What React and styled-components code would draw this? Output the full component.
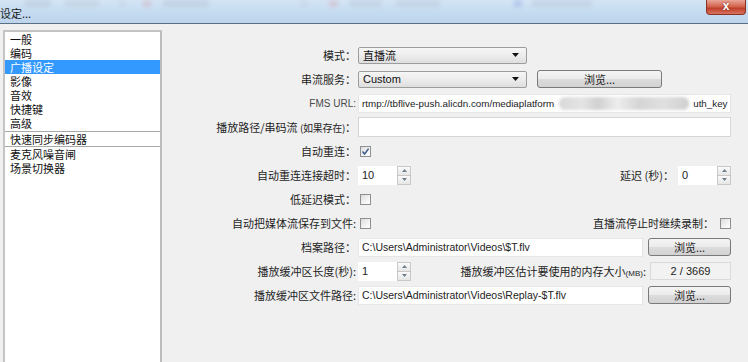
import React from "react"
import styled, { createGlobalStyle } from "styled-components"

const cjk = `"Noto Sans CJK SC", "Noto Sans", sans-serif`
const latin = `"Liberation Sans", "DejaVu Sans", sans-serif`

const GlobalStyle = createGlobalStyle`
    html, body {
        margin: 0;
        padding: 0;
        background: #f0f0f0;
    }
    body {
        width: 748px;
        height: 362px;
        overflow: hidden;
        font-family: ${cjk};
    }
`

const menuItems = [
    { label: "一般" },
    { label: "编码" },
    { label: "广播设定", selected: true },
    { label: "影像" },
    { label: "音效" },
    { label: "快捷键" },
    { label: "高级" },
    { label: "快速同步编码器", divided: true },
    { label: "麦克风噪音闸" },
    { label: "场景切换器" },
]

const ghosts = [
    { left: 25, width: 26, color: "#a9b7c6" },
    { left: 14, width: 34, color: "#b3c0ce" },
    { left: 20, width: 6, color: "#b9c5d2" },
    { left: 18, width: 8, color: "#d39aa4" },
    { left: 12, width: 46, color: "#aab8c8" },
    { left: 92, width: 6, color: "#bac6d3" },
    { left: 22, width: 9, color: "#d69ea6" },
    { left: 12, width: 32, color: "#aebccb" },
    { left: 14, width: 44, color: "#b0bdcc" },
    { left: 74, width: 8, color: "#7f93d9" },
    { left: 10, width: 60, color: "#aebccb" },
]

const CheckMark = () => (
    <svg width="9" height="9" viewBox="0 0 9 9">
        <path d="M1.5 4.6 L3.6 7 L7.6 1.6" fill="none" stroke="#3c5a8a" strokeWidth="1.5" />
    </svg>
)

const Arrow = ({ up }) => (
    <svg width="5" height="3" viewBox="0 0 5 3">
        <path d={up ? "M0 3 L2.5 0 L5 3 Z" : "M0 0 L2.5 3 L5 0 Z"} fill="#6f7d8c" />
    </svg>
)

const Spin = ({ value }) => (
    <SpinBox>
        <SpinValue>{value}</SpinValue>
        <SpinButtons>
            <SpinButton><Arrow up /></SpinButton>
            <SpinButton><Arrow /></SpinButton>
        </SpinButtons>
    </SpinBox>
)

const Select = ({ value }) => (
    <SelectBox>
        <span>{value}</span>
        <svg width="7" height="4" viewBox="0 0 7 4">
            <path d="M0 0 L7 0 L3.5 4 Z" fill="#111" />
        </svg>
    </SelectBox>
)

const App = () => {
    return (
        <>
            <GlobalStyle />
            <Window>
                <TitleBar>
                    <TitleLeft>
                        <GhostStrip>
                            {ghosts.map((g, i) => (
                                <Ghost key={i} left={g.left} width={g.width} color={g.color} />
                            ))}
                        </GhostStrip>
                        <Title>设定...</Title>
                    </TitleLeft>
                    <CloseButton>x</CloseButton>
                </TitleBar>
                <Body>
                    <Sidebar>
                        {menuItems.map((item, i) => (
                            <MenuItem key={i} selected={item.selected} divided={item.divided}>
                                {item.label}
                            </MenuItem>
                        ))}
                    </Sidebar>
                    <Form>
                        <Row>
                            <Label>模式：</Label>
                            <Controls>
                                <Select value="直播流" />
                            </Controls>
                        </Row>
                        <Row>
                            <Label>串流服务：</Label>
                            <Controls>
                                <Select value="Custom" />
                                <Button wide>浏览...</Button>
                            </Controls>
                        </Row>
                        <Row>
                            <Label latin>FMS URL:</Label>
                            <Controls>
                                <TextField url>
                                    rtmp://tbflive-push.alicdn.com/mediaplatform
                                    <Smudge />
                                    uth_key
                                </TextField>
                            </Controls>
                        </Row>
                        <Row>
                            <Label>播放路径/串码流 <Paren>(如果存在)</Paren>：</Label>
                            <Controls>
                                <TextField tall />
                            </Controls>
                        </Row>
                        <Row>
                            <Label>自动重连：</Label>
                            <Controls>
                                <CheckBox><CheckMark /></CheckBox>
                            </Controls>
                        </Row>
                        <Row>
                            <Label>自动重连连接超时：</Label>
                            <Controls>
                                <Spin value="10" />
                                <InlineLabel>延迟 (秒)：</InlineLabel>
                                <Spin value="0" />
                            </Controls>
                        </Row>
                        <Row>
                            <Label>低延迟模式：</Label>
                            <Controls>
                                <CheckBox />
                            </Controls>
                        </Row>
                        <Row>
                            <Label>自动把媒体流保存到文件:</Label>
                            <Controls>
                                <CheckBox />
                                <InlineLabel>直播流停止时继续录制：</InlineLabel>
                                <CheckBox />
                            </Controls>
                        </Row>
                        <Row>
                            <Label>档案路径：</Label>
                            <Controls>
                                <TextField path>C:\Users\Administrator\Videos\$T.flv</TextField>
                                <Button>浏览...</Button>
                            </Controls>
                        </Row>
                        <Row>
                            <Label>播放缓冲区长度(秒):</Label>
                            <Controls>
                                <Spin value="1" />
                                <InlineLabel>
                                    播放缓冲区估计要使用的内存大小<Small>(MB)</Small>:
                                </InlineLabel>
                                <ValueBox>2 / 3669</ValueBox>
                            </Controls>
                        </Row>
                        <Row>
                            <Label>播放缓冲区文件路径:</Label>
                            <Controls>
                                <TextField path>C:\Users\Administrator\Videos\Replay-$T.flv</TextField>
                                <Button>浏览...</Button>
                            </Controls>
                        </Row>
                    </Form>
                </Body>
            </Window>
        </>
    )
}

const Window = styled.div`
    width: 748px;
    height: 362px;
    display: flex;
    flex-direction: column;
    background: #f0f0f0;
    overflow: hidden;
`
const TitleBar = styled.div`
    height: 23px;
    flex: none;
    display: flex;
    background: linear-gradient(180deg, #d3e4f5 0%, #c5dbf0 55%, #bcd4ec 100%);
    border-bottom: 1px solid #5b6f84;
`
const TitleLeft = styled.div`
    flex: 1;
    display: flex;
    flex-direction: column;
`
const GhostStrip = styled.div`
    height: 6px;
    display: flex;
    align-items: flex-start;
`
const Ghost = styled.span`
    flex: none;
    margin-left: ${props => props.left}px;
    width: ${props => props.width}px;
    height: 7px;
    background: ${props => props.color};
    opacity: 0.35;
    filter: blur(2px);
    border-radius: 2px;
`
const Title = styled.div`
    font-size: 11px;
    line-height: 14px;
    color: #1a1a1a;
`
const CloseButton = styled.div`
    width: 38px;
    height: 14px;
    margin-right: 2px;
    border: 1px solid #8a3325;
    border-top: none;
    border-radius: 0 0 4px 4px;
    background: linear-gradient(180deg, #e9a697 0%, #d46650 45%, #c0402b 60%, #d7735f 100%);
    color: #fff;
    font-family: ${latin};
    font-weight: bold;
    font-size: 12px;
    line-height: 13px;
    text-align: center;
    text-shadow: 0 0 2px #6a1a10;
`
const Body = styled.div`
    flex: 1;
    display: flex;
    align-items: flex-start;
`
const Sidebar = styled.ul`
    list-style: none;
    margin: 6px 0 0 3px;
    padding: 0;
    width: 155px;
    height: 340px;
    flex: none;
    background: #fff;
    border: 2px solid #c4c4c4;
    border-right-color: #bdbdbd;
`
const MenuItem = styled.li`
    height: 14px;
    line-height: 14px;
    overflow: hidden;
    padding-left: 5px;
    font-size: 11px;
    color: ${props => props.selected ? "#fff" : "#111"};
    background: ${props => props.selected ? "#3399ff" : "transparent"};
    border-top: ${props => props.divided ? "1px solid #a8a8a8" : "none"};
    border-bottom: ${props => props.divided ? "1px solid #a8a8a8" : "none"};
    margin-top: ${props => props.divided ? "1px" : "0"};
`
const Form = styled.div`
    flex: 1;
    display: flex;
    flex-direction: column;
    gap: 4px;
    padding: 21px 17px 0 0;
`
const Row = styled.div`
    height: 20px;
    display: grid;
    grid-template-columns: 194px 1fr;
    column-gap: 2px;
    align-items: center;
`
const Label = styled.div`
    text-align: right;
    font-family: ${props => props.latin ? latin : cjk};
    font-size: ${props => props.latin ? "10px" : "11px"};
    color: ${props => props.latin ? "#4a4a4a" : "#1e1e1e"};
    white-space: nowrap;
`
const Paren = styled.span`
    font-size: 10px;
    letter-spacing: -0.3px;
`
const Controls = styled.div`
    display: flex;
    align-items: center;
    height: 20px;
`
const InlineLabel = styled.div`
    margin-left: auto;
    margin-right: 4px;
    font-size: 11px;
    color: #1e1e1e;
    white-space: nowrap;
`
const Small = styled.span`
    font-family: ${latin};
    font-size: 8px;
`
const SelectBox = styled.div`
    width: 169px;
    height: 17px;
    box-sizing: border-box;
    display: flex;
    align-items: center;
    justify-content: space-between;
    padding: 0 7px 0 4px;
    border: 1px solid #9c9c9c;
    border-radius: 2px;
    background: linear-gradient(180deg, #f6f6f6 0%, #ececec 50%, #dedede 100%);
    font-family: ${latin}, ${cjk};
    font-size: 11px;
    color: #111;
`
const Button = styled.div`
    width: ${props => props.wide ? "125px" : "83px"};
    margin-left: ${props => props.wide ? "10px" : "5px"};
    height: 18px;
    box-sizing: border-box;
    border: 1px solid #7a7a7a;
    border-radius: 3px;
    background: linear-gradient(180deg, #f4f4f4 0%, #ebebeb 50%, #dcdcdc 51%, #d2d2d2 100%);
    text-align: center;
    font-size: 11px;
    line-height: 16px;
    color: #222;
`
const TextField = styled.div`
    width: ${props => props.path ? "285px" : "373px"};
    height: ${props => props.tall ? "20px" : "19px"};
    box-sizing: border-box;
    display: flex;
    align-items: center;
    padding-left: 3px;
    background: #fff;
    border: 1px solid ${props => props.tall ? "#d6d6d6" : "#e6e6e6"};
    font-family: ${latin};
    font-size: ${props => props.url ? "9.8px" : "10.5px"};
    color: #222;
    white-space: nowrap;
    overflow: hidden;
`
const Smudge = styled.span`
    flex: none;
    width: 130px;
    height: 13px;
    margin: 0 4px 0 5px;
    border-radius: 6px;
    background: linear-gradient(90deg, #d8d8d8 0%, #e4e4e4 18%, #d0d0d0 30%, #ededed 45%, #d4d4d4 62%, #e0e0e0 80%, #cfcfcf 100%);
    filter: blur(1.5px);
`
const CheckBox = styled.div`
    width: 11px;
    height: 11px;
    box-sizing: border-box;
    display: flex;
    align-items: center;
    justify-content: center;
    border: 1px solid #8e8f8f;
    background: linear-gradient(135deg, #dcdcdc 0%, #f4f4f4 60%, #fff 100%);
    margin-left: 2px;
`
const SpinBox = styled.div`
    width: 53px;
    height: 19px;
    display: flex;
    flex: none;
    background: #fff;
`
const SpinValue = styled.div`
    flex: 1;
    padding-left: 4px;
    font-family: ${latin};
    font-size: 11px;
    line-height: 19px;
    color: #222;
`
const SpinButtons = styled.div`
    width: 14px;
    display: flex;
    flex-direction: column;
    border: 1px solid #c9c9c9;
    box-sizing: border-box;
    background: #f4f4f4;
`
const SpinButton = styled.div`
    flex: 1;
    display: flex;
    align-items: center;
    justify-content: center;
    background: linear-gradient(180deg, #fafafa, #e6e6e6);
    & + & {
        border-top: 1px solid #c9c9c9;
    }
`
const ValueBox = styled.div`
    width: 81px;
    height: 18px;
    box-sizing: border-box;
    border: 1px solid #dadada;
    background: #f2f2f2;
    text-align: center;
    font-family: ${latin};
    font-size: 11px;
    line-height: 16px;
    color: #222;
`

export default App
